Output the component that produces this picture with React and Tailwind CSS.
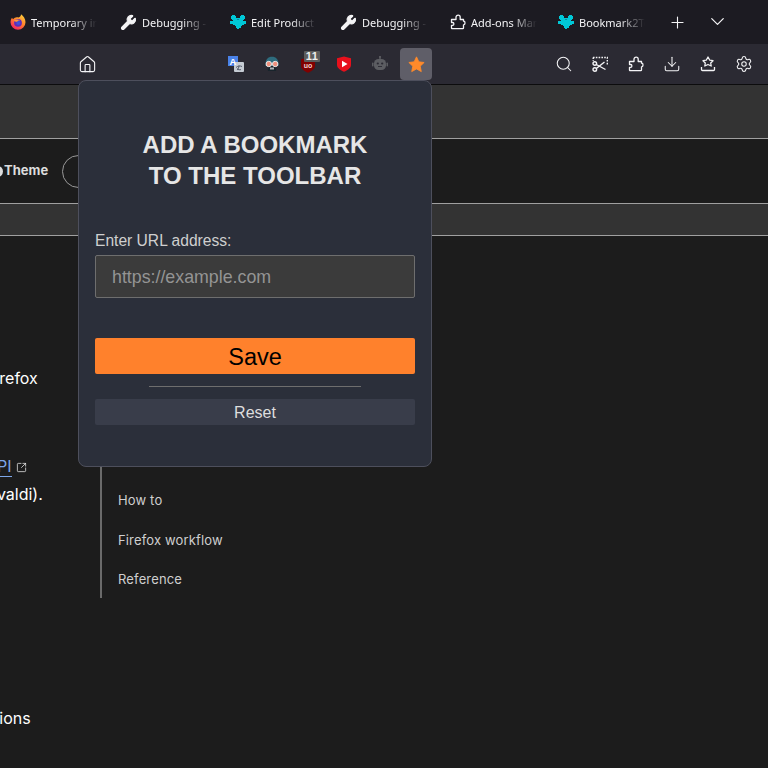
import React from "react";
import { Home, Search, Download, Settings, Plus, ChevronDown, Wrench, SquareArrowOutUpRight } from "lucide-react";

const Puzzle = ({ className = "" }) => (
  <svg viewBox="0 0 16 16" className={className} fill="none" stroke="currentColor" strokeWidth="1.300" strokeLinejoin="round">
    <path d="M1.500 5.500H6V3.200a2.100 2.100 0 0 1 4.200 0v2.300h3.300v1.700h.2c.9 0 1.300.8 1.300 1.800s-.4 1.800-1.300 1.800h-.2v3.200c0 .4-.3.700-.7.700H2.200a.7.700 0 0 1-.7-.7v-2.700h1.100c.9 0 1.300-.7 1.300-1.400s-.4-1.400-1.300-1.400H1.500z" />
  </svg>
);

const TealPuzzle = () => (
  <svg viewBox="0 0 16 16" className="w-4 h-4 shrink-0">
    <path fill="#00c8d7" d="M1 2h1V1h3v1h1v2h4V2h1V1h3v1h1v3h-1v1h-1v1h3v3h-2v1h-2v1h-1v2H9v1H7v-1H6v-2H5v-1H3v-1H0V7h3V6H2V5H1z" />
    <rect x="7" y="5" width="2" height="1" fill="#0a8ea0" />
  </svg>
);

const Firefox = () => (
  <svg viewBox="0 0 16 16" className="w-4 h-4 shrink-0">
    <defs>
      <linearGradient id="ff" x1="0.8" y1="0" x2="0.2" y2="1">
        <stop offset="0" stopColor="#ffd23a" />
        <stop offset="0.5" stopColor="#ff7a2d" />
        <stop offset="1" stopColor="#f0186c" />
      </linearGradient>
    </defs>
    <path d="M11 .3c2.400 1.700 4.500 4.200 4.500 8a7.500 7.500 0 1 1-15 0c0-1.800.5-3.300 1.500-4.500l1 1.500C4.500 3.300 6.500 2.800 8.500 3.500c1.500-.6 2.700-1.600 2.500-3.200z" fill="url(#ff)" />
    <circle cx="8" cy="8.800" r="3.900" fill="#5f2db8" />
    <circle cx="8.300" cy="9" r="2" fill="#3f53d8" />
    <path d="M3.700 7c1.500-1.600 4.500-2 6.500-.4-1.600-.1-2.700.3-3 1.200-1.700 0-2.800-.2-3.500-.8z" fill="#ff9a3c" />
  </svg>
);

const Tab = ({ icon, label, w = "w-[110px]" }) => (
  <div className={`${w} h-full shrink-0 flex items-center gap-[5px] pl-[10px] text-[11px] text-[#f4f4f6]`}>
    {icon}
    <span className="w-[66px] pt-[2px] overflow-hidden whitespace-nowrap [mask-image:linear-gradient(to_right,black_60%,transparent_100%)]">{label}</span>
  </div>
);

const Slot = ({ children, className = "" }) => (
  <div className={`w-9 h-8 shrink-0 flex items-center justify-center relative ${className}`}>{children}</div>
);

const Translate = () => (
  <svg viewBox="0 0 16 16" className="w-4 h-4">
    <rect x="0" y="0" width="10" height="10" fill="#4a82e8" />
    <rect x="6" y="6" width="10" height="10" rx="1" fill="#c6ccd4" />
    <text x="5" y="8.500" textAnchor="middle" fontSize="9.500" fontWeight="700" fill="#fff" fontFamily="Liberation Sans">A</text>
    <path d="M8 11.500c1.500-1.500 4-2 6-1M9 14c1-.5 2-2.500 2-4.500M13 13.500c-1 .5-3 .5-4-1" stroke="#4a5060" strokeWidth=".9" fill="none" />
  </svg>
);

const Spy = () => (
  <svg viewBox="0 0 16 16" className="w-4 h-4">
    <path d="M1.500 8C1.500 3.500 4 .8 8 .8s6.500 2.700 6.500 7.200v2h-13z" fill="#2e6c7e" />
    <path d="M3.500 10h9L12 15H4z" fill="#18242c" />
    <circle cx="4.800" cy="8" r="2.700" fill="#ee8f7c" stroke="#e8e8e8" strokeWidth="1" />
    <circle cx="11.200" cy="8" r="2.700" fill="#ee8f7c" stroke="#e8e8e8" strokeWidth="1" />
    <rect x="6" y="11.500" width="4" height="2" fill="#aeb4b8" />
  </svg>
);

const Shield = ({ fill, children }) => (
  <svg viewBox="0 0 16 16" className="w-4 h-4">
    <path d="M1 2.300 8 .5l7 1.800v6.700c0 3-3.500 5.400-7 6.700C4.500 14.400 1 12 1 9z" fill={fill} />
    {children}
  </svg>
);

const Robot = () => (
  <svg viewBox="0 0 16 16" className="w-4 h-4" fill="#5c5d62">
    <rect x="7.300" y="0" width="1.400" height="3" />
    <circle cx="8" cy="1" r="1" />
    <rect x="2" y="3" width="12" height="11" rx="4.500" />
    <rect x="0" y="6.500" width="1.500" height="4" rx=".7" />
    <rect x="14.500" y="6.500" width="1.500" height="4" rx=".7" />
    <circle cx="5.800" cy="7.500" r="1.100" fill="#2b2a33" />
    <circle cx="10.200" cy="7.500" r="1.100" fill="#2b2a33" />
    <path d="M6 10.500h4" stroke="#2b2a33" strokeWidth=".9" />
  </svg>
);

const Star = () => (
  <svg viewBox="0 0 16 16" className="w-[17px] h-[17px]">
    <path d="M8 .8l2.200 4.700 5 .6-3.700 3.500 1 5.100L8 12.200l-4.500 2.500 1-5.100L.8 6.100l5-.6z" fill="#ff8a2a" stroke="#ff8a2a" strokeWidth=".8" strokeLinejoin="round" />
  </svg>
);

const Screenshot = () => (
  <svg viewBox="0 0 16 16" className="w-4 h-4" fill="none" stroke="#f4f4f6" strokeWidth="1.400">
    <path d="M1 1.500h14.300V9.500" strokeDasharray="1.600 1.200" />
    <path d="M1.200 1.500V5" strokeDasharray="1.600 1.200" />
    <circle cx="2.800" cy="13.500" r="1.800" />
    <circle cx="2.800" cy="7.500" r="1.800" />
    <path d="M4.300 8.500 13.500 13.500M4.300 12.500 12.500 6" />
  </svg>
);

const BookmarkTray = () => (
  <svg viewBox="0 0 16 16" className="w-4 h-4" fill="none" stroke="#f4f4f6" strokeWidth="1.300" strokeLinejoin="round">
    <path d="M8 1l1.800 3.200 3.200.5-2.300 2.300.5 3L8 8.500l-3.200 1.500.5-3L3 4.700l3.200-.5z" />
    <path d="M1.500 11v2.500c0 .6.400 1 1 1h11c.6 0 1-.4 1-1V11" />
  </svg>
);

export default function App() {
  return (
    <div className="w-[768px] h-[768px] overflow-hidden relative bg-[#1c1c1c] font-['Inter',sans-serif]">
      <div className="h-[44px] bg-[#1c1b22] flex items-center font-['Noto_Sans',sans-serif]">
        <Tab icon={<Firefox />} label="Temporary installation" />
        <Tab icon={<Wrench size={17} fill="#f4f4f6" strokeWidth={1.500} />} label="Debugging - Runtime" />
        <Tab icon={<TealPuzzle />} label="Edit Product" />
        <Tab icon={<Wrench size={17} fill="#f4f4f6" strokeWidth={1.500} />} label="Debugging - Runtime" />
        <Tab icon={<Puzzle className="w-4 h-4 shrink-0" />} label="Add-ons Manager" w="w-[108px]" />
        <Tab icon={<TealPuzzle />} label="Bookmark2Toolbar" w="w-[112px]" />
        <div className="w-[38px] flex justify-center shrink-0 -ml-[2px] text-[#f4f4f6]"><Plus size={19} strokeWidth={1.400} /></div>
        <div className="w-[42px] flex justify-center shrink-0 -mt-[2px] text-[#f4f4f6]"><ChevronDown size={23} strokeWidth={1.300} /></div>
      </div>

      <div className="h-[41px] bg-[#2b2a33] border-b border-[#0c0c0d] flex items-start pt-1 text-[#f4f4f6]">
        <div className="w-[69px] shrink-0" />
        <Slot><Home size={19} strokeWidth={1.400} /></Slot>
        <div className="w-[113px] shrink-0" />
        <Slot><Translate /></Slot>
        <Slot><Spy /></Slot>
        <Slot>
          <div className="mt-[1px]">
            <Shield fill="#800000">
              <text x="8" y="10.500" textAnchor="middle" fontSize="7" fontWeight="700" fill="#f0d0d0" fontFamily="Liberation Sans">uo</text>
            </Shield>
          </div>
          <span className="absolute right-[6px] top-[3px] w-4 h-[11px] text-center bg-[#5c5c5c] rounded-[1px] text-[11px] leading-[11px] tracking-[0.5px] font-bold text-[#eeeeee] font-['Liberation_Sans',sans-serif]">11</span>
        </Slot>
        <Slot>
          <Shield fill="#e8101c"><path d="M6 4.800 11.500 8 6 11.200z" fill="#fff" /></Shield>
        </Slot>
        <Slot><Robot /></Slot>
        <Slot className="rounded-[4px]">
          <div className="w-8 h-8 rounded-[4px] bg-[#5f5e68] flex items-center justify-center"><Star /></div>
        </Slot>
        <div className="w-[112px] shrink-0" />
        <Slot><Search size={18} strokeWidth={1.400} /></Slot>
        <Slot><Screenshot /></Slot>
        <Slot><Puzzle className="w-4 h-4" /></Slot>
        <Slot><Download size={18} strokeWidth={1.400} /></Slot>
        <Slot><BookmarkTray /></Slot>
        <Slot><Settings size={18} strokeWidth={1.400} /></Slot>
      </div>

      <div className="h-[54px] bg-[#333333] border-b border-[#a0a0a0]" />
      <div className="h-[65px] flex items-center border-b border-[#a0a0a0]">
        <span className="w-[48px] -ml-[8px] shrink-0 flex items-center gap-[1px] text-[13px] font-bold text-[#dddddd]">
          <span className="w-[11px] h-[11px] shrink-0 rounded-full bg-[#dddddd]" />
          Theme
        </span>
        <div className="ml-[22px] w-[80px] h-[33px] rounded-full border border-[#999999]" />
      </div>
      <div className="h-[32px] bg-[#333333] border-b border-[#a0a0a0]" />

      <div className="flex h-[362px]">
        <div className="w-[100px] shrink-0 text-[16px] text-white whitespace-nowrap">
          <p className="mt-[130px] h-[24px] leading-[24px] ml-[-14px]">Firefox</p>
          <p className="mt-[65px] h-[24px] leading-[24px] flex items-center ml-[-14px]">
            <span className="text-[#7ea6e8] border-b border-[#7ea6e8] leading-[19px]">API</span>
            <SquareArrowOutUpRight size={11} strokeWidth={1.500} className="ml-[4px]" />
          </p>
          <p className="mt-[3px] h-[24px] leading-[24px] ml-[-18px]">Vivaldi).</p>
        </div>
        <nav className="border-l-2 border-[#6a6a6a] pl-[16px] pt-[255px] flex flex-col gap-[20px] text-[13px] leading-[19.500px] tracking-[0.15px] text-[#cfcfcf]">
          <a>How to</a>
          <a>Firefox workflow</a>
          <a>Reference</a>
        </nav>
      </div>
      <p className="mt-[108px] text-[16px] leading-[24px] text-white ml-[-28px] whitespace-nowrap">Options</p>

      <div className="absolute left-[78px] top-[80px] w-[354px] h-[387px] bg-[#2b2f3a] border border-[#4d4f5c] rounded-[8px] px-4 pt-[48px] font-['Liberation_Sans',sans-serif]">
        <h1 className="text-[24px] leading-[31px] font-bold text-center text-[#e6e6e6] uppercase">Add a bookmark<br />to the toolbar</h1>
        <label className="block mt-[41px] text-[15.600px] leading-[18px] text-[#cfcfcf]">Enter URL address:</label>
        <input readOnly placeholder="https://example.com" className="block mt-[5px] w-full h-[43px] px-4 pt-[1px] bg-[#3b3b3b] border border-[#6e6e6e] rounded-[2px] text-[17.800px] placeholder:text-[#949494] outline-none" />
        <button className="block mt-[40px] w-full h-[36px] pt-[1px] bg-[#ff812c] rounded-[2px] text-[23.500px] leading-[36px] text-black text-center">Save</button>
        <div className="mt-[12px] mx-auto w-[212px] h-px bg-[#6e6e6e]" />
        <button className="block mt-[12px] w-full h-[26px] pt-[1px] bg-[#393d4a] rounded-[2px] text-[16px] leading-[26px] text-[#dedede] text-center">Reset</button>
      </div>
    </div>
  );
}
